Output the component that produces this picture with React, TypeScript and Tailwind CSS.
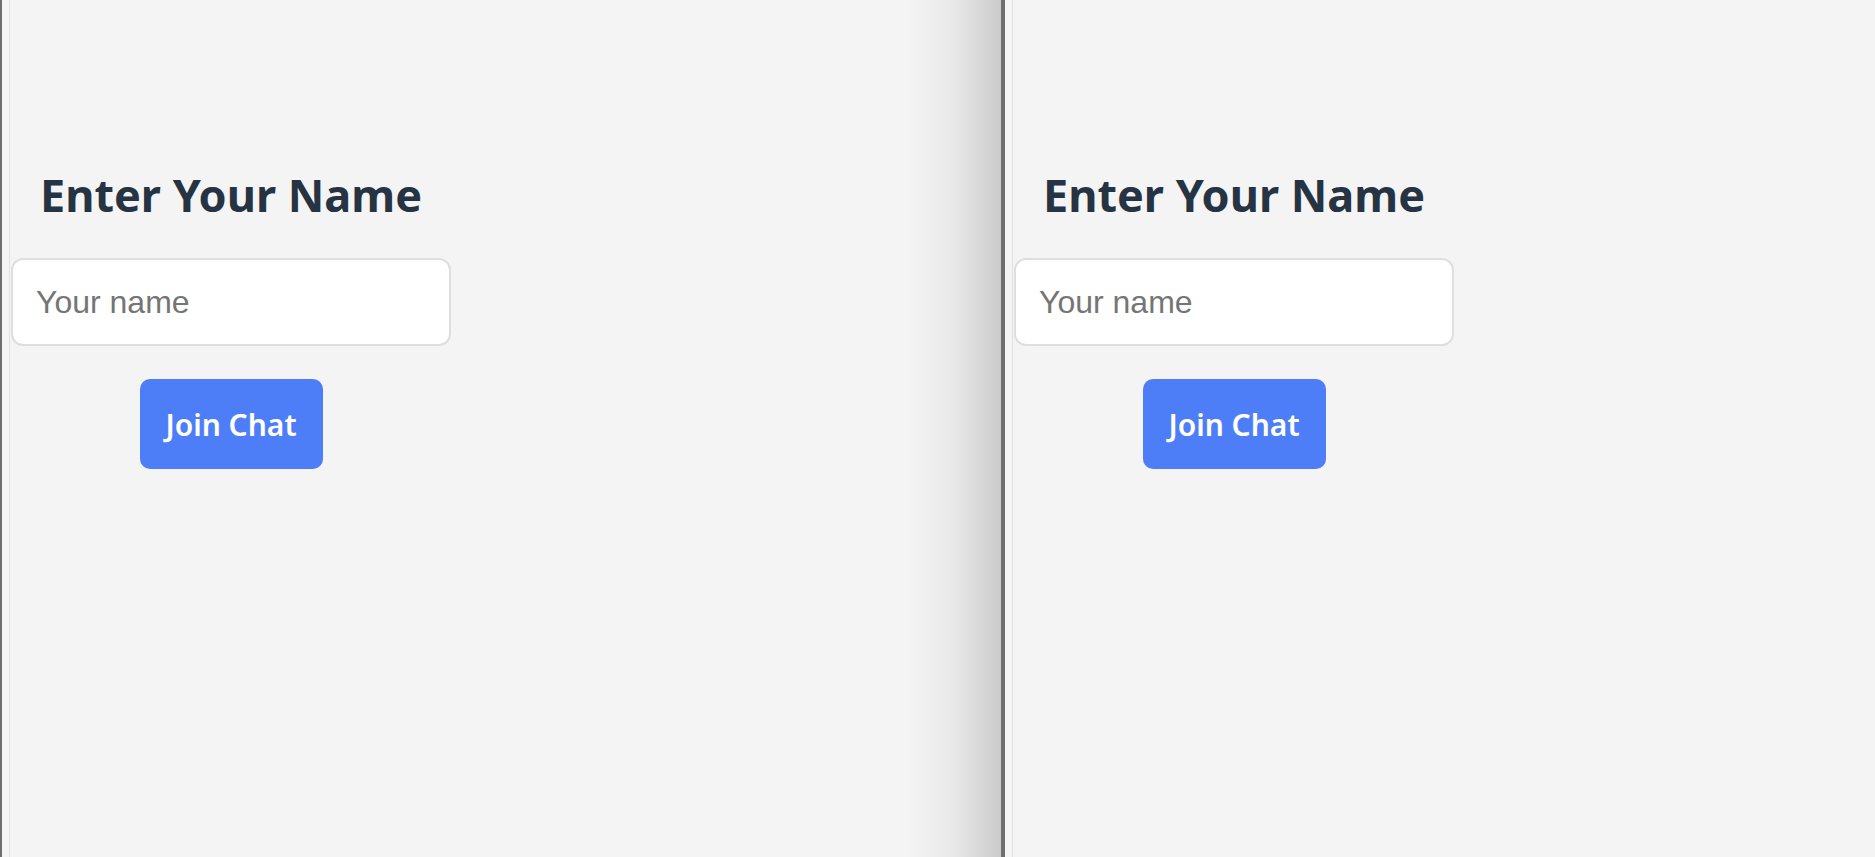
function JoinForm() {
  return (
    <div className="flex w-[440px] flex-col items-center">
      <h1 className="mt-[167px] text-[45px] font-bold leading-[56px] text-[#263343] [font-family:'Noto_Sans',sans-serif]">
        Enter Your Name
      </h1>
      <input
        type="text"
        placeholder="Your name"
        className="mt-[35px] h-[88px] w-full rounded-[12px] border-2 border-[#dedede] bg-white px-[23px] text-[32px] text-[#222] outline-none placeholder:text-[#757575] [font-family:'Liberation_Sans',Arial,sans-serif]"
      />
      <button className="mt-[33px] flex h-[90px] w-[183px] items-center justify-center rounded-[10px] bg-[#4e7ef7] text-[30px] font-semibold text-white [font-family:'Noto_Sans',sans-serif]">
        Join Chat
      </button>
    </div>
  );
}

function Pane({ edge }: { edge: string }) {
  return (
    <div className="flex h-full">
      <div className={`${edge} h-full shrink-0 bg-[#6e6e6e]`}></div>
      <div className="h-full w-[7px] shrink-0"></div>
      <div className="h-full w-px shrink-0 bg-[#e2e2e2]"></div>
      <div className="h-full w-px shrink-0"></div>
      <JoinForm />
    </div>
  );
}

export default function App() {
  return (
    <div className="flex h-[857px] w-[1875px] overflow-hidden bg-[#f4f4f4]">
      <div className="flex h-full w-[1001px] shrink-0">
        <Pane edge="w-[2px]" />
        <div className="flex-1"></div>
        <div className="h-full w-[95px] shrink-0 bg-gradient-to-r from-[#f4f4f4] via-[#e9e9e9] to-[#cbcbcb]"></div>
      </div>
      <div className="flex h-full flex-1">
        <Pane edge="w-[4px]" />
      </div>
    </div>
  );
}
